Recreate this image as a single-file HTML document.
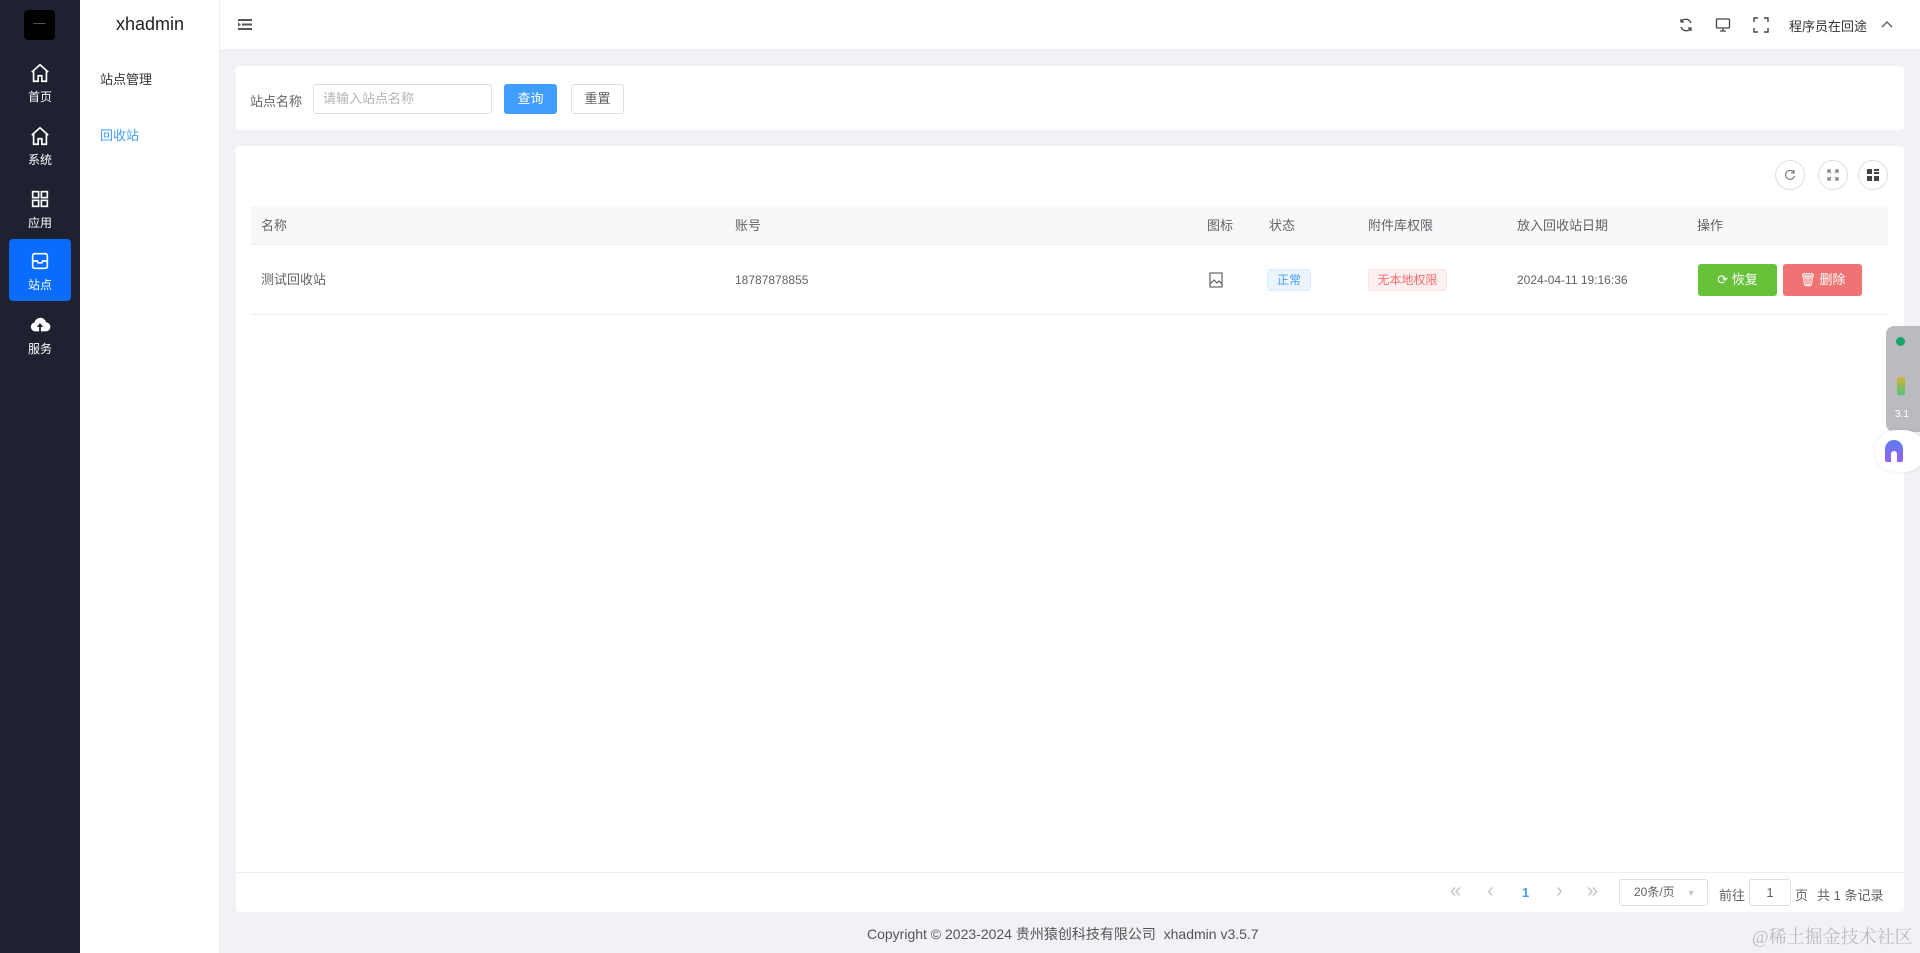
<!DOCTYPE html>
<html><head><meta charset="utf-8"><style>
*{box-sizing:border-box;margin:0;padding:0}
body{width:1920px;height:953px;overflow:hidden;background:#f0f2f5;font-family:"Liberation Sans","Noto Sans CJK SC",sans-serif;font-size:13px;color:#606266;position:relative}
.abs{position:absolute}
.side{left:0;top:0;width:80px;height:953px;background:#1e2230}
.logo{left:24px;top:10px;width:31px;height:30px;background:#000;border-radius:4px}
.nav{left:9px;width:62px;height:62px;color:#fff;text-align:center;font-size:12px;border-radius:4px}
.nav svg{display:block;margin:8px auto 4px}
.sub{left:80px;top:0;width:140px;height:953px;background:#fff;border-right:1px solid #eee}
.hdr{left:220px;top:0;width:1700px;height:49px;background:#fff}
.card{background:#fff;border-radius:4px}
.th{position:absolute;top:0;line-height:39px;color:#606266}
.td{position:absolute;line-height:70px}
.btn{position:absolute;border-radius:3px;text-align:center;font-size:13px}
.pg{position:absolute;top:880px;color:#c0c4cc;font-size:20px}
</style></head><body>
<div class="abs side"></div>
<div class="abs logo"><div style="position:absolute;left:9px;top:13px;width:13px;height:3px;border-top:1px solid #555;border-radius:3px"></div></div>
<div class="abs nav" style="top:54px"><svg width="22" height="22" viewBox="0 0 24 24" fill="none" stroke="#fff" stroke-width="1.8"><path d="M3 11 12 3l9 8M5 9.5V21h5v-6h4v6h5V9.5"/></svg>首页</div>
<div class="abs nav" style="top:117px"><svg width="22" height="22" viewBox="0 0 24 24" fill="none" stroke="#fff" stroke-width="1.8"><path d="M3 11 12 3l9 8M5 9.5V21h5v-6h4v6h5V9.5"/></svg>系统</div>
<div class="abs nav" style="top:180px"><svg width="22" height="22" viewBox="0 0 24 24" fill="none" stroke="#fff" stroke-width="1.8"><rect x="4" y="4" width="6.5" height="6.5"/><rect x="13.5" y="4" width="6.5" height="6.5"/><rect x="4" y="13.5" width="6.5" height="6.5"/><rect x="13.5" y="13.5" width="6.5" height="6.5"/></svg>应用</div>
<div class="abs nav" style="top:239px;background:#0a6cff"><svg width="22" height="22" viewBox="0 0 24 24" fill="none" stroke="#fff" stroke-width="1.8" style="margin-top:11px"><rect x="4" y="4" width="16" height="16" rx="2"/><path d="M4 12h5l1 2h4l1-2h5"/></svg>站点</div>
<div class="abs nav" style="top:306px"><svg width="22" height="22" viewBox="0 0 24 24" fill="#fff"><path d="M7 19a5 5 0 0 1-1-9.9A6.5 6.5 0 0 1 18.6 9 4.5 4.5 0 0 1 18 19h-5v-5h2.5L12 10l-3.5 4H11v5z"/></svg>服务</div>
<div class="abs sub"></div>
<div class="abs" style="left:80px;width:140px;top:14px;text-align:center;font-size:18px;color:#222">xhadmin</div>
<div class="abs" style="left:100px;top:69px;color:#333;font-size:13px">站点管理</div>
<div class="abs" style="left:100px;top:125px;color:#409eff;font-size:13px">回收站</div>
<div class="abs hdr"></div>
<svg class="abs" style="left:238px;top:18px" width="14" height="13" viewBox="0 0 14 13" fill="#555"><rect x="0" y="1" width="14" height="2"/><rect x="4" y="5.5" width="10" height="2"/><rect x="0" y="10" width="14" height="2"/><path d="M0 4.5l3 2-3 2z"/></svg>
<svg class="abs" style="left:1678px;top:17px" width="16" height="16" viewBox="0 0 16 16" fill="none" stroke="#444" stroke-width="1.3"><path d="M13 6A5.5 5.5 0 0 0 3 5M3 2v3h3M3 10a5.5 5.5 0 0 0 10 1M13 14v-3h-3"/></svg>
<svg class="abs" style="left:1715px;top:17px" width="16" height="16" viewBox="0 0 16 16" fill="none" stroke="#444" stroke-width="1.3"><rect x="1.5" y="2" width="13" height="9" rx="1"/><path d="M8 11v3M5 14h6"/></svg>
<svg class="abs" style="left:1753px;top:17px" width="16" height="16" viewBox="0 0 16 16" fill="none" stroke="#444" stroke-width="1.4"><path d="M1 5V1h4M11 1h4v4M15 11v4h-4M5 15H1v-4"/></svg>
<div class="abs" style="left:1789px;top:16px;color:#333;font-size:13px">程序员在回途</div>
<svg class="abs" style="left:1881px;top:20px" width="12" height="8" viewBox="0 0 12 8" fill="none" stroke="#555" stroke-width="1.3"><path d="M1 7l5-5 5 5"/></svg>

<div class="abs card" style="left:236px;top:66px;width:1668px;height:64px"></div>
<div class="abs" style="left:250px;top:91px;color:#606266">站点名称</div>
<div class="abs" style="left:313px;top:84px;width:179px;height:30px;border:1px solid #dcdfe6;border-radius:3px;color:#b0b3b8;padding:0 9px;line-height:28px">请输入站点名称</div>
<div class="btn" style="left:504px;top:84px;width:53px;height:30px;line-height:30px;background:#409eff;color:#fff">查询</div>
<div class="btn" style="left:571px;top:84px;width:53px;height:30px;line-height:28px;border:1px solid #dcdfe6;color:#606266">重置</div>

<div class="abs card" style="left:236px;top:146px;width:1668px;height:766px"></div>
<div class="abs" style="left:1775px;top:160px;width:30px;height:30px;border:1px solid #dcdfe6;border-radius:50%"><svg style="margin:8px" width="12" height="12" viewBox="0 0 12 12" fill="none" stroke="#666" stroke-width="1"><path d="M10 3.5A4.5 4.5 0 1 0 10.5 7M10 1v3H7"/></svg></div>
<div class="abs" style="left:1818px;top:160px;width:30px;height:30px;border:1px solid #dcdfe6;border-radius:50%"><svg style="margin:8px" width="12" height="12" viewBox="0 0 12 12" fill="none" stroke="#666" stroke-width="1"><path d="M1 4V1h3M8 1h3v3M11 8v3H8M4 11H1V8M1 1l3 3M11 1 8 4M11 11 8 8M1 11l3-3"/></svg></div>
<div class="abs" style="left:1858px;top:160px;width:30px;height:30px;border:1px solid #dcdfe6;border-radius:50%"><svg style="margin:8px" width="12" height="12" viewBox="0 0 12 12" fill="#444"><rect x="0" y="0" width="5" height="5"/><rect x="7" y="0" width="5" height="2"/><rect x="7" y="3" width="5" height="2"/><rect x="0" y="7" width="5" height="5"/><rect x="7" y="7" width="5" height="5"/></svg></div>

<div class="abs" style="left:251px;top:206px;width:1637px;height:39px;background:#f8f8f9;border-bottom:1px solid #ebeef5">
<span class="th" style="left:10px">名称</span><span class="th" style="left:484px">账号</span><span class="th" style="left:956px">图标</span><span class="th" style="left:1018px">状态</span><span class="th" style="left:1117px">附件库权限</span><span class="th" style="left:1266px">放入回收站日期</span><span class="th" style="left:1446px">操作</span></div>
<div class="abs" style="left:251px;top:245px;width:1637px;height:70px;border-bottom:1px solid #ebeef5">
<span class="td" style="left:10px">测试回收站</span><span class="td" style="left:484px;font-size:12px">18787878855</span>
<svg class="abs" style="left:958px;top:27px" width="14" height="16" viewBox="0 0 14 16" fill="none" stroke="#555" stroke-width="1.1"><rect x="1" y="1" width="12" height="14"/><path d="M1 12l4-4 3 3 2-2 3 3"/></svg>
<span class="abs" style="left:1016px;top:24px;width:44px;height:22px;line-height:20px;text-align:center;background:#ecf5ff;border:1px solid #d9ecff;color:#409eff;border-radius:3px;font-size:12px">正常</span>
<span class="abs" style="left:1117px;top:24px;width:79px;height:22px;line-height:20px;text-align:center;background:#fef0f0;border:1px solid #fde2e2;color:#f56c6c;border-radius:3px;font-size:12px">无本地权限</span>
<span class="td" style="left:1266px;font-size:12px">2024-04-11 19:16:36</span>
<div class="btn" style="left:1447px;top:19px;width:79px;height:32px;line-height:32px;background:#67c23a;color:#fff">⟳ 恢复</div>
<div class="btn" style="left:1532px;top:19px;width:79px;height:32px;line-height:32px;background:#f07373;color:#fff">🗑︎ 删除</div>
</div>
<div class="abs" style="left:236px;top:872px;width:1668px;border-top:1px solid #ebeef5"></div>
<div class="pg" style="left:1450px">«</div>
<div class="pg" style="left:1487px">‹</div>
<div class="abs" style="top:885px;left:1522px;color:#409eff;font-weight:bold">1</div>
<div class="pg" style="left:1556px">›</div>
<div class="pg" style="left:1587px">»</div>
<div class="abs" style="left:1619px;top:879px;width:89px;height:27px;border:1px solid #dcdfe6;border-radius:3px;padding:0 0 0 14px;line-height:25px;font-size:12px;white-space:nowrap">20条/页<span style="color:#c0c4cc;font-size:9px;margin-left:12px">▼</span></div>
<div class="abs" style="left:1719px;top:885px">前往</div>
<div class="abs" style="left:1749px;top:879px;width:42px;height:27px;border:1px solid #dcdfe6;border-radius:3px;text-align:center;line-height:25px">1</div>
<div class="abs" style="left:1795px;top:885px">页</div>
<div class="abs" style="left:1817px;top:885px">共 1 条记录</div>
<div class="abs" style="left:867px;top:924px;color:#555;font-size:14px">Copyright © 2023-2024 贵州猿创科技有限公司 &nbsp;xhadmin v3.5.7</div>
<div class="abs" style="left:1752px;top:923px;color:#bbb;font-size:18px;font-family:'Liberation Serif','Noto Serif CJK SC',serif">@稀土掘金技术社区</div>
<div class="abs" style="left:1886px;top:326px;width:40px;height:106px;background:#b9bbbf;border-radius:8px 0 0 8px"></div>
<div class="abs" style="left:1896px;top:337px;width:9px;height:9px;border-radius:50%;background:#1aa36b"></div>
<div class="abs" style="left:1897px;top:377px;width:8px;height:18px;border-radius:2px;background:linear-gradient(#d4b33a,#55c27a)"></div>
<div class="abs" style="left:1895px;top:409px;color:#fff;font-size:10px">3.1</div>
<div class="abs" style="left:1875px;top:430px;width:50px;height:42px;border-radius:21px;background:#fff;box-shadow:0 0 4px rgba(0,0,0,.1)"></div>
<div class="abs" style="left:1885px;top:440px;width:18px;height:22px;border-radius:9px 9px 2px 2px;background:linear-gradient(#5a7cf5,#9a62ef)"><div style="position:absolute;left:6px;top:11px;width:6px;height:11px;background:#fff;border-radius:3px 3px 0 0"></div></div>
</body></html>
